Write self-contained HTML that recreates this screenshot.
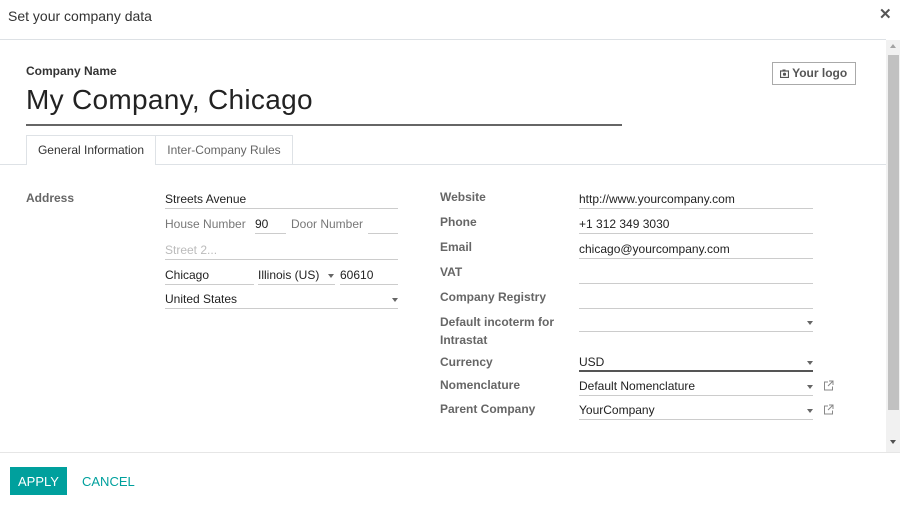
<!DOCTYPE html>
<html><head><style>
*{margin:0;padding:0;box-sizing:border-box}
body{width:900px;height:512px;background:#fff;font-family:"Liberation Sans",sans-serif;font-size:12px;color:#222;position:relative;overflow:hidden}
.a{position:absolute;white-space:nowrap}
.lbl{position:absolute;font-weight:bold;color:#666;font-size:12px;line-height:18px}
.f{position:absolute;border-bottom:1px solid #ccc;height:20px;line-height:19px;font-size:12px;color:#222;padding-top:1px}
.car{position:absolute;right:0;top:9px;width:0;height:0;border-left:3.5px solid transparent;border-right:3.5px solid transparent;border-top:4px solid #666}
.ext{position:absolute;width:11px;height:11px}
</style></head><body>
<div class="a" style="left:8px;top:8px;font-size:14px;color:#333">Set your company data</div>
<div class="a" style="left:879px;top:5px;font-size:15px;color:#555;font-weight:bold">✕</div>
<div class="a" style="left:0;top:39px;width:886px;height:1px;background:#dde1e5"></div>
<div class="a" style="left:886px;top:40px;width:14px;height:412px;background:#f1f1f1"></div>
<div class="a" style="left:888px;top:55px;width:11px;height:355px;background:#c1c1c1"></div>
<div class="a" style="left:890px;top:44px;border-left:3px solid transparent;border-right:3px solid transparent;border-bottom:4px solid #a3a3a3"></div>
<div class="a" style="left:890px;top:440px;border-left:3px solid transparent;border-right:3px solid transparent;border-top:4px solid #505050"></div>

<div class="a" style="left:26px;top:64px;font-weight:bold;font-size:12px;color:#333">Company Name</div>
<div class="a" style="left:26px;top:84px;font-size:28px;color:#222;letter-spacing:0.3px">My Company, Chicago</div>
<div class="a" style="left:26px;top:124px;width:596px;height:2px;background:#666"></div>
<div class="a" style="left:772px;top:62px;width:84px;height:23px;border:1px solid #aaa;font-weight:bold;color:#555;font-size:12px;line-height:21px;padding-left:7px">
<svg width="9" height="9" viewBox="0 0 9 9" style="vertical-align:-1px"><rect x="0.5" y="2" width="8" height="6.5" fill="none" stroke="#555" stroke-width="1.2"/><circle cx="4.5" cy="5.2" r="1.6" fill="#555"/><rect x="2.5" y="0.5" width="3" height="1.5" fill="#555"/></svg> Your logo</div>

<div class="a" style="left:0;top:164px;width:886px;height:1px;background:#dee2e6"></div>
<div class="a" style="left:26px;top:135px;width:130px;height:30px;border:1px solid #dee2e6;border-bottom:none;background:#fff;text-align:center;line-height:29px;color:#333">General Information</div>
<div class="a" style="left:156px;top:135px;width:137px;height:29px;border:1px solid #dee2e6;border-left:none;border-bottom:none;text-align:center;line-height:29px;color:#666">Inter-Company Rules</div>

<div class="lbl" style="left:26px;top:189px">Address</div>
<div class="f" style="left:165px;top:189px;width:233px">Streets Avenue</div>
<div class="a" style="left:165px;top:215px;color:#777;line-height:18px">House Number</div>
<div class="f" style="left:255px;top:214px;width:31px">90</div>
<div class="a" style="left:291px;top:215px;color:#777;line-height:18px">Door Number</div>
<div class="f" style="left:368px;top:214px;width:30px"></div>
<div class="f" style="left:165px;top:240px;width:233px;color:#bbb">Street 2...</div>
<div class="f" style="left:165px;top:265px;width:89px">Chicago</div>
<div class="f" style="left:258px;top:265px;width:77px">Illinois (US)<span class="car" style="right:1px"></span></div>
<div class="f" style="left:340px;top:265px;width:58px">60610</div>
<div class="f" style="left:165px;top:289px;width:233px">United States<span class="car" style="right:0"></span></div>

<div class="lbl" style="left:440px;top:188px">Website</div>
<div class="f" style="left:579px;top:189px;width:234px">http://www.yourcompany.com</div>
<div class="lbl" style="left:440px;top:213px">Phone</div>
<div class="f" style="left:579px;top:214px;width:234px">+1 312 349 3030</div>
<div class="lbl" style="left:440px;top:238px">Email</div>
<div class="f" style="left:579px;top:239px;width:234px">chicago@yourcompany.com</div>
<div class="lbl" style="left:440px;top:263px">VAT</div>
<div class="f" style="left:579px;top:264px;width:234px"></div>
<div class="lbl" style="left:440px;top:288px">Company Registry</div>
<div class="f" style="left:579px;top:289px;width:234px"></div>
<div class="lbl" style="left:440px;top:313px">Default incoterm for<br>Intrastat</div>
<div class="f" style="left:579px;top:312px;width:234px"><span class="car"></span></div>
<div class="lbl" style="left:440px;top:353px">Currency</div>
<div class="f" style="left:579px;top:352px;width:234px;border-bottom:2px solid #555">USD<span class="car"></span></div>
<div class="lbl" style="left:440px;top:376px">Nomenclature</div>
<div class="f" style="left:579px;top:376px;width:234px">Default Nomenclature<span class="car"></span></div>
<div class="lbl" style="left:440px;top:400px">Parent Company</div>
<div class="f" style="left:579px;top:400px;width:234px">YourCompany<span class="car"></span></div>
<svg class="ext" style="left:823px;top:380px" viewBox="0 0 11 11"><path d="M5 2H1.5v8h8V6.5" fill="none" stroke="#888" stroke-width="1"/><path d="M6 1h4v4M10 1L5 6" fill="none" stroke="#888" stroke-width="1"/></svg>
<svg class="ext" style="left:823px;top:404px" viewBox="0 0 11 11"><path d="M5 2H1.5v8h8V6.5" fill="none" stroke="#888" stroke-width="1"/><path d="M6 1h4v4M10 1L5 6" fill="none" stroke="#888" stroke-width="1"/></svg>

<div class="a" style="left:0;top:452px;width:900px;height:1px;background:#e6e6e6"></div>
<div class="a" style="left:10px;top:467px;width:57px;height:28px;background:#00a09d;color:#fff;font-size:13px;text-align:center;line-height:29px">APPLY</div>
<div class="a" style="left:82px;top:467px;color:#00a09d;font-size:13px;line-height:29px">CANCEL</div>
</body></html>
